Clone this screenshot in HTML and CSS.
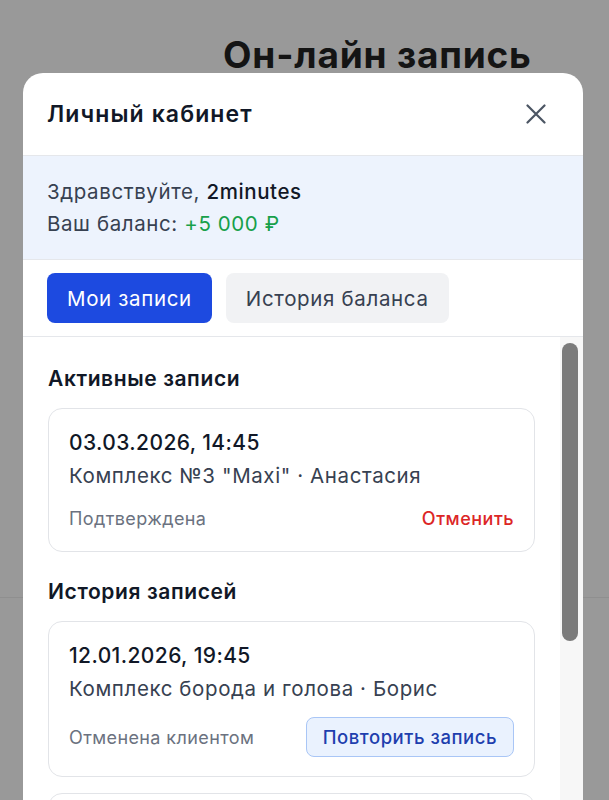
FILE: index.html
```html
<!DOCTYPE html>
<html lang="ru">
<head>
    <meta charset="UTF-8">
    <meta name="viewport" content="width=device-width, initial-scale=1.0">
    <title>Он-лайн запись</title>
    <link rel="stylesheet" href="styles.css">
</head>
<body>
    <div class="page">
        <h1 class="page-title">Он-лайн запись</h1>
    </div>

    <div class="modal">
        <div class="modal-header">
            <h2>Личный кабинет</h2>
            <button class="close" aria-label="Закрыть">
                <svg width="20" height="20" viewBox="0 0 20 20">
                    <path d="M1.5 1.5 L18.5 18.5 M18.5 1.5 L1.5 18.5" stroke="#4b5563" stroke-width="2.2" stroke-linecap="round"/>
                </svg>
            </button>
        </div>

        <div class="greeting">
            <p>Здравствуйте, <b>2minutes</b></p>
            <p>Ваш баланс: <span class="plus">+5 000 ₽</span></p>
        </div>

        <div class="tabs">
            <button class="tab active">Мои записи</button>
            <button class="tab">История баланса</button>
        </div>

        <div class="modal-body">
            <div class="scrollbar"><div class="thumb"></div></div>

            <h3>Активные записи</h3>
            <div class="card">
                <div class="date">03.03.2026, 14:45</div>
                <div class="place">Комплекс №3 "Maxi" · Анастасия</div>
                <div class="card-foot">
                    <span class="status">Подтверждена</span>
                    <button class="cancel">Отменить</button>
                </div>
            </div>

            <h3>История записей</h3>
            <div class="card">
                <div class="date">12.01.2026, 19:45</div>
                <div class="place">Комплекс борода и голова · Борис</div>
                <div class="card-foot">
                    <span class="status">Отменена клиентом</span>
                    <button class="repeat">Повторить запись</button>
                </div>
            </div>
            <div class="card card-tail"></div>
        </div>
    </div>
</body>
</html>
```

FILE: styles.css
```css
body {
    margin: 0;
    height: 800px;
    overflow: hidden;
    background: #999;
    font-family: Inter, "Noto Sans", sans-serif;
    color: #111827;
    position: relative;
}
.page {
    height: 597px;
    border-bottom: 1px solid #8f8f8f;
}
.page-title {
    margin: 0;
    padding: 32px 0 0 223px;
    font-size: 37px;
    font-weight: 700;
    color: #141414;
    letter-spacing: 0.8px;
}
.modal {
    position: absolute;
    top: 73px;
    left: 23px;
    width: 560px;
    height: 760px;
    background: #fff;
    border-radius: 20px;
    overflow: hidden;
    letter-spacing: 0.6px;
}
.modal-header {
    height: 83px;
    padding: 0 24px;
    display: flex;
    align-items: center;
    justify-content: space-between;
    border-bottom: 1px solid #e5e7eb;
    box-sizing: border-box;
}
.modal-header h2 {
    margin: 0;
    font-size: 23px;
    font-weight: 600;
    letter-spacing: 1.1px;
}
.close {
    background: none;
    border: none;
    padding: 0;
    margin-right: 13px;
    display: flex;
}
.greeting {
    background: #edf3fd;
    padding: 20px 24px 19px;
    border-bottom: 1px solid #e5e7eb;
    font-size: 20.5px;
    color: #374151;
}
.greeting p {
    margin: 0;
    line-height: 32px;
}
.greeting b {
    font-weight: 500;
    color: #111827;
}
.plus {
    color: #17a04a;
}
.tabs {
    display: flex;
    gap: 14px;
    padding: 13px 24px 13px;
    border-bottom: 1px solid #e5e7eb;
}
.tab {
    height: 50px;
    padding: 0 20px;
    border: none;
    border-radius: 8px;
    font-family: inherit;
    font-size: 20.5px;
    letter-spacing: 0.65px;
    background: #f1f2f4;
    color: #374151;
}
.tab.active {
    background: #1d4ae0;
    color: #fff;
}
.modal-body {
    position: relative;
    padding: 27px 48px 0 25px;
}
.scrollbar {
    position: absolute;
    top: 0;
    right: 0;
    width: 23px;
    height: 100%;
    background: #f7f7f7;
}
.thumb {
    margin: 6px 0 0 2px;
    width: 16px;
    height: 298px;
    border-radius: 8px;
    background: #7b7b7b;
}
h3 {
    margin: 0 0 14px;
    font-size: 21px;
    font-weight: 600;
    line-height: 30px;
}
.card {
    border: 1px solid #e2e4e8;
    border-radius: 14px;
    padding: 17px 20px 19px;
    margin-bottom: 25px;
}
.card-tail {
    height: 120px;
    margin-top: -9px;
}
.date {
    font-size: 21px;
    font-weight: 500;
    line-height: 34px;
    letter-spacing: 0.4px;
}
.place {
    font-size: 20.5px;
    color: #374151;
    line-height: 32px;
}
.card-foot {
    display: flex;
    justify-content: space-between;
    align-items: center;
    margin-top: 12px;
    min-height: 28px;
}
.status {
    font-size: 18px;
    letter-spacing: 0.4px;
    color: #6b7280;
}
.cancel {
    background: none;
    border: none;
    padding: 0;
    font-family: inherit;
    font-size: 18px;
    letter-spacing: 0.5px;
    font-weight: 500;
    color: #dc2626;
}
.repeat {
    height: 40px;
    padding: 0 16px;
    background: #eaf2fe;
    border: 1px solid #a9c6f6;
    border-radius: 8px;
    font-family: inherit;
    font-size: 18.5px;
    letter-spacing: 0.55px;
    font-weight: 500;
    color: #1e3fae;
}
```
